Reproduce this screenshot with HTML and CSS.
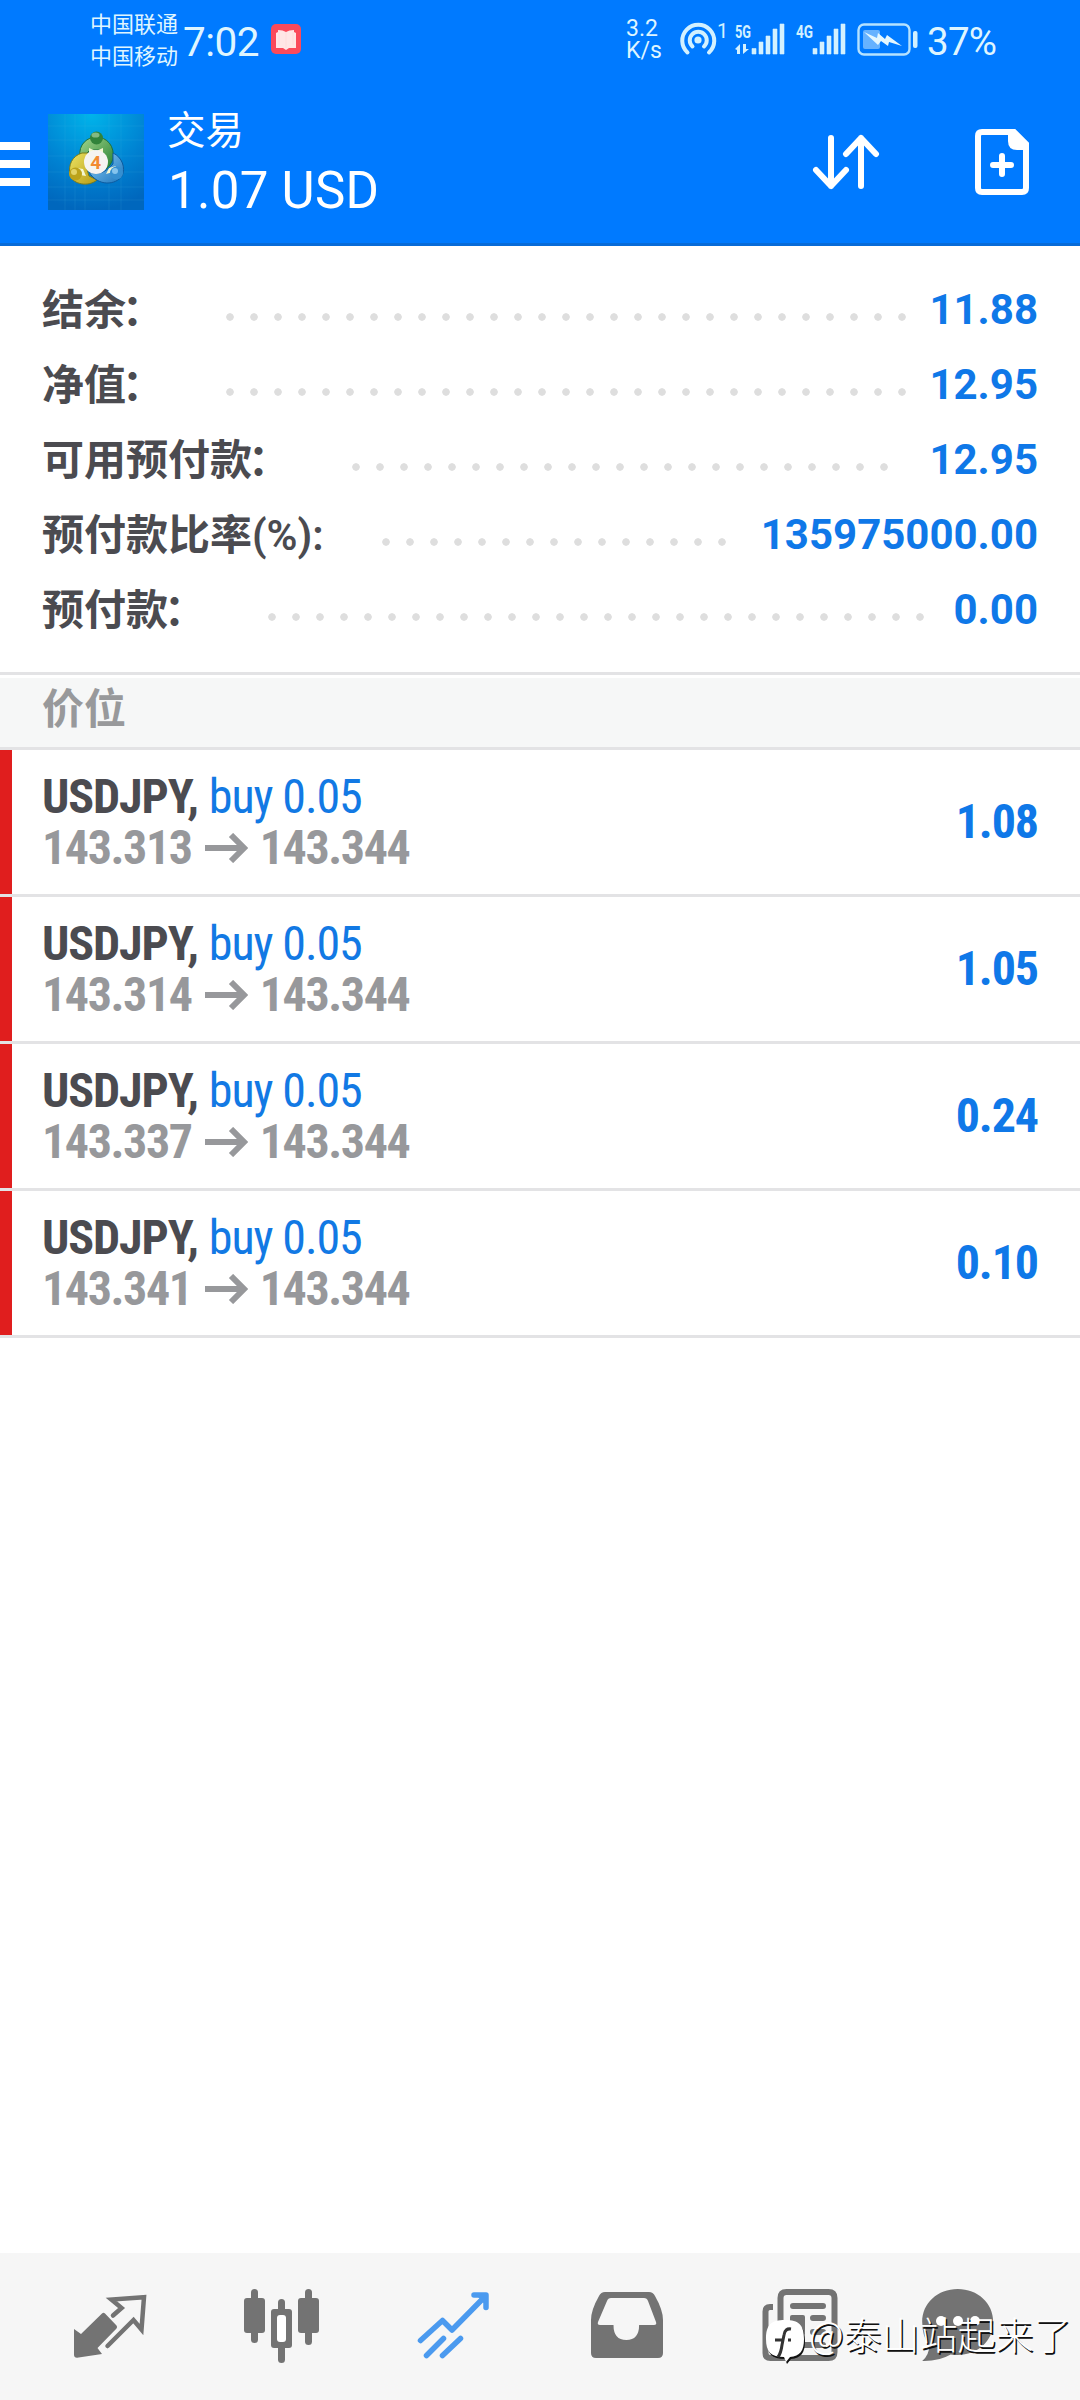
FILE: index.html
```html
<!DOCTYPE html>
<html lang="zh-CN">
<head>
<meta charset="utf-8">
<title>交易</title>
<link rel="stylesheet" href="styles.css">
</head>
<body>
<div class="app">
  <header class="header">
    <div class="status">
      <div class="carriers"><span>中国联通</span><span>中国移动</span></div>
      <span class="clock">7:02</span>
      <svg class="book" width="30" height="30" viewBox="0 0 30 30"><rect width="30" height="30" rx="5" fill="#fb4a5b"/><path d="M5 9l2-1V6q5 0 8 2q3-2 8-2v2l2 1v15h-7l-3 2-3-2H5z" fill="#ffe6e6"/><path d="M15 8v16M8 8v13M22 8v13" stroke="#ffdcdc" stroke-width="1"/></svg>
      <div class="speed"><span>3.2</span><span>K/s</span></div>
      <svg class="signals" width="240" height="50" viewBox="678 14 240 50" fill="#d3f1ff">
        <g fill="none" stroke="#d3f1ff" stroke-width="4" stroke-linecap="round"><path d="M687.500 52.500a16 16 0 1 1 21.500 0"/><path d="M692.500 46.500a8.500 8.500 0 1 1 11.500 0"/></g>
        <circle cx="698" cy="40" r="3.600"/>
        <text x="717" y="38" font-size="20">1</text>
        <text x="735" y="37.500" font-size="18" font-weight="700" textLength="16" lengthAdjust="spacingAndGlyphs">5G</text>
        <text x="796" y="37.500" font-size="18" font-weight="700" textLength="17" lengthAdjust="spacingAndGlyphs">4G</text>
        <path d="M735 49l5-5v10h-3v-4zM743 44v10l6-5h-3v-5z"/>
        <path d="M752 48.500h4v5.500h-4zM759 42h4v12h-4zM766 36h4v18h-4zM773 29h4v25h-4zM780 24h4v30h-4zM813 48.500h4v5.500h-4zM820 42h4v12h-4zM827 36h4v18h-4zM834 29h4v25h-4zM841 24h4v30h-4z" stroke="#d3f1ff" stroke-width=".6" stroke-linejoin="round"/>
        <rect x="858.500" y="24.500" width="51" height="30" rx="5.500" fill="none" stroke="#b5e2ff" stroke-width="2.400"/>
        <rect x="863" y="30" width="17" height="19" rx="2" fill="#66b2ff"/>
        <path d="M864 32l13 6 1-5 7 6 2-4 15 11-13-4-1 4-7-5-3 4z" fill="#e4f7ff"/>
        <rect x="913" y="31" width="4.500" height="17" rx="2"/>
      </svg>
      <span class="percent">37%</span>
    </div>
    <div class="toolbar">
      <svg class="menu" width="30" height="44" viewBox="0 0 30 44" fill="#fff"><path d="M0 0h30v8H0zM0 18h30v8H0zM0 36h30v8H0z"/></svg>
      <svg class="logo" width="96" height="96" viewBox="0 0 96 96">
        <defs>
          <radialGradient id="bg" cx=".45" cy="0" r="1"><stop offset="0" stop-color="#00b4ea"/><stop offset=".6" stop-color="#0082d2"/><stop offset="1" stop-color="#0067bd"/></radialGradient>
          <linearGradient id="gr" x2="1" y2="1"><stop offset="0" stop-color="#a3d68d"/><stop offset="1" stop-color="#268132"/></linearGradient>
          <linearGradient id="ye" x2="1" y2="1"><stop offset="0" stop-color="#ece464"/><stop offset="1" stop-color="#b79b14"/></linearGradient>
          <linearGradient id="bl" x2="1" y2="1"><stop offset="0" stop-color="#8bd0f6"/><stop offset="1" stop-color="#1b74bd"/></linearGradient>
        </defs>
        <rect width="96" height="96" fill="url(#bg)"/>
        <path d="M17 0v96M27 0v96M37 0v96M61 0v96M73 0v96M0 12h96M0 26h96M0 42h96M0 58h96M0 73h96M0 86h96" stroke="#45b9ea" stroke-opacity=".14"/>
        <path d="M32 43c-2-13 8-20 16-20 11 0 19 9 17 22-2 5-4 8-7 10l-4-19H42l-7 7z" fill="url(#gr)" stroke="#1c703c"/>
        <path d="M34 39c-10 3-14 12-12 22 3 10 19 12 27 5l-8-4-4-13 5-10z" fill="url(#ye)" stroke="#7c7c18"/>
        <path d="M65 39c9 4 13 15 9 23-6 9-24 11-33-4 9 4 17 0 24-8z" fill="url(#bl)" stroke="#0d5b9f"/>
        <path d="M41 34l7 3 7-3v5H41zM29 54l6 1 3 7-6-1zM58 60l3-6 7-2-3 6z" fill="#f4f7d0"/>
        <circle cx="48.500" cy="24" r="6.500" fill="#31833a"/><ellipse cx="47.500" cy="21" rx="4" ry="2.600" fill="#84b982"/>
        <circle cx="27.500" cy="60" r="6.500" fill="#bba31b"/><circle cx="26" cy="58" r="3" fill="#e2d367"/>
        <circle cx="68.500" cy="59" r="6.500" fill="#368fd0"/><circle cx="67" cy="57" r="3" fill="#85c4ed"/>
        <circle cx="48" cy="48" r="12" fill="#f5f4f1"/>
        <text x="42.300" y="54.500" font-size="19" font-weight="700" fill="#f28b32">4</text>
      </svg>
      <div class="titles"><span class="title">交易</span><span class="total">1.07 USD</span></div>
      <svg class="sort" width="70" height="60" viewBox="810 132 70 60" fill="none" stroke="#fff" stroke-width="6" stroke-linecap="round" stroke-linejoin="round"><path d="M831 138v48M816 170l15 16 15-16M861 186v-48M846 154l15-16 15 16"/></svg>
      <svg class="add" width="54" height="66" viewBox="975 129 54 66"><path d="M978 136q0-4 4-4h32l12 12v44q0 4-4 4h-40q-4 0-4-4z" fill="none" stroke="#fff" stroke-width="6"/><path d="M1008 132v9q0 9 9 9h9v-6l-12-12z" fill="#fff"/><path d="M993 165h18M1002 156v18" stroke="#fff" stroke-width="6" stroke-linecap="round"/></svg>
    </div>
  </header>

  <section class="account">
    <div class="line"><span class="label">结余<span class="colon">：</span></span><i class="dots d29"></i><b>11.88</b></div>
    <div class="line"><span class="label">净值<span class="colon">：</span></span><i class="dots d29"></i><b>12.95</b></div>
    <div class="line"><span class="label">可用预付款<span class="colon">：</span></span><i class="dots d23"></i><b>12.95</b></div>
    <div class="line"><span class="label">预付款比率<span class="latin">(%):</span></span><i class="dots d15"></i><b>135975000.00</b></div>
    <div class="line"><span class="label">预付款<span class="colon">：</span></span><i class="dots d28"></i><b>0.00</b></div>
  </section>

  <h2 class="section">价位</h2>
  <ul class="positions">
    <li><div class="deal"><div class="pair"><strong>USDJPY,</strong> <span>buy 0.05</span></div><div class="prices"><span>143.313</span><svg width="43" height="30" viewBox="0 0 43 30"><path d="M0 15h39M26 2l13 13-13 13"/></svg><span>143.344</span></div></div><b class="profit">1.08</b></li>
    <li><div class="deal"><div class="pair"><strong>USDJPY,</strong> <span>buy 0.05</span></div><div class="prices"><span>143.314</span><svg width="43" height="30" viewBox="0 0 43 30"><path d="M0 15h39M26 2l13 13-13 13"/></svg><span>143.344</span></div></div><b class="profit">1.05</b></li>
    <li><div class="deal"><div class="pair"><strong>USDJPY,</strong> <span>buy 0.05</span></div><div class="prices"><span>143.337</span><svg width="43" height="30" viewBox="0 0 43 30"><path d="M0 15h39M26 2l13 13-13 13"/></svg><span>143.344</span></div></div><b class="profit">0.24</b></li>
    <li><div class="deal"><div class="pair"><strong>USDJPY,</strong> <span>buy 0.05</span></div><div class="prices"><span>143.341</span><svg width="43" height="30" viewBox="0 0 43 30"><path d="M0 15h39M26 2l13 13-13 13"/></svg><span>143.344</span></div></div><b class="profit">0.10</b></li>
  </ul>

  <nav class="tabs">
    <svg viewBox="24 2253 172 147"><path d="M74 2329l7 5 21-20.500q1.500-1.500 3 0l11.500 12q1.200 1.500 0 3l-19 19.500 4.500 6-25 3.700q-3 0-3-3z" fill="#737373"/><path d="M113 2315.500l8.600-7.500-10.200-8.500 32.600-2.300-2.500 32.300-8-9.500-26 26" fill="none" stroke="#737373" stroke-width="4.500" stroke-linecap="round"/></svg>
    <svg viewBox="196 2253 172 147"><g fill="#737373"><rect x="251" y="2289" width="7" height="54" rx="3.500"/><rect x="244" y="2298" width="21" height="35" rx="3"/><rect x="278" y="2299" width="7" height="64" rx="3.500"/><rect x="271" y="2309" width="21" height="39" rx="3"/><rect x="305" y="2289" width="7" height="56" rx="3.500"/><rect x="298" y="2298" width="21" height="35" rx="3"/></g><rect x="277" y="2315" width="9" height="27" rx="3" fill="#fff"/></svg>
    <svg viewBox="368 2253 172 147"><path d="M420.500 2340.500l22-20 9.500 9.500 33-33.500M474 2295h12v12.500M426.500 2355.500l17-17M442.500 2355.500l18-17" fill="none" stroke="#4b9aef" stroke-width="5.500" stroke-linecap="round" stroke-linejoin="round"/><path d="M476 2295h10v10z" fill="#4b9aef"/></svg>
    <svg viewBox="540 2253 173 147"><path fill-rule="evenodd" d="M605 2292h44q4 0 6 4 8 14 8 24v33q0 5-5 5h-62q-5 0-5-5v-33q0-10 8-24 2-4 6-4zM611 2298q-3 0-4 3l-9 21q-1 3 2 3h13.500q0 15 12.800 15t12.800-15H654q3 0 2-3l-8-21q-1-3-4-3z" fill="#737373"/></svg>
    <svg viewBox="713 2253 173 147"><path d="M773 2307h-3q-4.500 0-4.500 4.500V2353q0 5 5 5h58q6 0 6-6v-54q0-6-6-6h-42q-6 0-6 6v55" fill="none" stroke="#737373" stroke-width="6"/><path d="M793 2306h30M813 2318h10M813 2332h10M793 2345h30" stroke="#737373" stroke-width="6" stroke-linecap="round"/><rect x="790" y="2315" width="15" height="20" rx="2" fill="#737373"/></svg>
    <svg viewBox="886 2253 194 147"><path d="M957.700 2289c20 0 35.500 14 35.500 33s-15.500 33-35.500 33q-4 0-7-.5-12 7-28.500 6.500 7-6 7-15-7-10-7-24c0-19 15.500-33 35.500-33z" fill="#737373"/><g fill="#fff"><circle cx="941" cy="2321" r="5"/><circle cx="958" cy="2321" r="5"/><circle cx="975" cy="2321" r="5"/></g></svg>
    <div class="watermark">
      <svg width="44" height="46" viewBox="763 2319 44 46"><path d="M785 2320c14 0 19 5 19 19 0 12-4 17-14 18l-4 5-2-5c-13 0-18-5-18-18 0-14 5-19 19-19z" fill="#111" transform="translate(1 2)"/><path d="M785 2320c14 0 19 5 19 19 0 12-4 17-14 18l-4 5-2-5c-13 0-18-5-18-18 0-14 5-19 19-19z" fill="#fff"/><path d="M778 2357q3-4 4-12l2-10q1-7 7-6M775 2340h7M788 2340h3" fill="none" stroke="#333" stroke-width="3"/></svg>
      <span>@泰山站起来了</span>
    </div>
  </nav>
</div>
</body>
</html>
```
FILE: styles.css
```css
* { box-sizing: border-box; }
body { margin: 0; background: #fff; font-family: Roboto, "Noto Sans CJK SC", sans-serif; }
svg { display: block; flex: none; }
.app { width: 1080px; height: 2400px; display: flex; flex-direction: column; overflow: hidden; }

.header { height: 246px; flex: none; background: #007aff; border-bottom: 3px solid #086bd8; color: #fff; }
.status { height: 80px; display: flex; align-items: flex-start; color: #dff5ff; }
.carriers { width: 93px; margin: 6px 0 0 90px; display: flex; flex-direction: column; font: 22px/32px "Noto Sans CJK SC", sans-serif; white-space: nowrap; }
.clock { width: 88px; margin-top: 18px; font-size: 40.500px; line-height: 48px; letter-spacing: -.5px; font-weight: 450; }
.book { margin-top: 24px; }
.speed { width: 52px; margin: 18px 0 0 325px; display: flex; flex-direction: column; font-size: 23px; line-height: 22px; font-weight: 450; }
.signals { margin-top: 14px; }
.percent { margin: 18px 0 0 9px; font-size: 38.500px; line-height: 48px; letter-spacing: -.7px; font-weight: 450; }

.toolbar { height: 163px; display: flex; align-items: flex-start; }
.menu { margin-top: 62px; }
.logo { margin: 34px 0 0 18px; }
.titles { width: 643px; margin: 20px 0 0 23px; display: flex; flex-direction: column; white-space: nowrap; }
.title { font: 38.500px/54px "Noto Sans CJK SC", sans-serif; }
.total { padding-left: 1px; font-size: 51px; line-height: 74px; letter-spacing: .3px; }
.sort { margin-top: 52px; }
.add { margin: 49px 0 0 95px; }

.account { height: 426px; flex: none; padding: 26px 42px 0; }
.line { height: 75px; display: flex; align-items: center; }
.label { font: 700 42px/70px "Noto Sans CJK SC", sans-serif; color: #4b4b50; height: 75px; white-space: nowrap; }
.colon { margin: 0 4px 0 -4px; }
.latin { font-family: Roboto, sans-serif; font-weight: 600; }
.line b { margin-left: auto; font-size: 42px; font-weight: 700; color: #0f78e8; }
.dots { height: 8px; margin: 14px 0 0 50px; background: radial-gradient(circle, #dedede 3.4px, transparent 4.100px) 0 0 / 24px 8px repeat-x; }
.d29 { width: 696px; }
.d28 { width: 672px; }
.d23 { width: 552px; }
.d15 { width: 360px; }

.section { height: 78px; flex: none; margin: 0; padding-left: 42px; border-top: 3px solid #e3e3e5; border-bottom: 3px solid #e3e3e5; background: linear-gradient(#fff 3px, #f6f7f7 3px); font: 700 42px/61px "Noto Sans CJK SC", sans-serif; color: #98999b; }
.positions { margin: 0; padding: 0; list-style: none; }
.positions li { height: 147px; display: flex; justify-content: space-between; align-items: center; padding: 0 42px; border-bottom: 3px solid #e3e3e5; background: linear-gradient(90deg, #e01e1e 12px, #fff 12px) padding-box; font-size: 48px; font-stretch: 75%; letter-spacing: -1.100px; }
.pair { height: 51px; line-height: 51px; color: #4b4b50; white-space: pre; }
.pair span { margin-left: 1px; color: #1279e4; }
.prices { height: 51px; line-height: 51px; display: flex; align-items: center; font-weight: 700; letter-spacing: -1.400px; color: #97989b; }
.prices svg { margin: 0 12px 0 13px; fill: none; stroke: #97989b; stroke-width: 6; }
.profit { margin-top: -2px; color: #0f78e8; }

.tabs { height: 147px; margin-top: auto; display: grid; grid-template-columns: 172px 172px 172px 173px 173px 194px; padding-left: 24px; background: #f6f6f6; position: relative; }
.tabs > svg { width: 100%; height: 147px; }
.watermark { position: absolute; left: 763px; top: 58px; display: flex; color: #fff; font: 300 38px/46px "Noto Sans CJK SC", sans-serif; white-space: nowrap; text-shadow: 1.500px 1.500px .5px #111; }
.watermark svg { margin-top: 8px; }
.watermark span { margin: -1px 0 0 2px; }
```
